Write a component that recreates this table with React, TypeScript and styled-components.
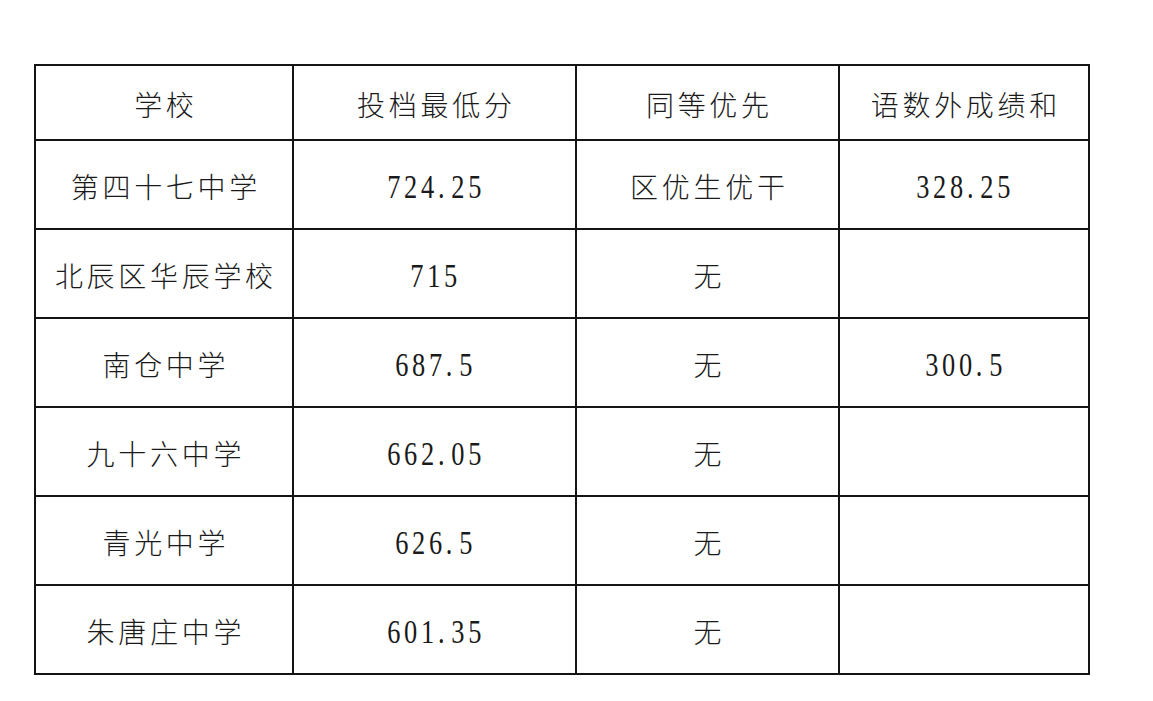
import React from "react";
import styled, { createGlobalStyle } from "styled-components";

const GlobalStyle = createGlobalStyle`
  html, body {
    margin: 0;
    padding: 0;
    background: #ffffff;
  }
`;

type Row = {
  school: string;
  score: string;
  priority: string;
  sum: string;
};

const rows: Row[] = [
  { school: "第四十七中学", score: "724.25", priority: "区优生优干", sum: "328.25" },
  { school: "北辰区华辰学校", score: "715", priority: "无", sum: "" },
  { school: "南仓中学", score: "687.5", priority: "无", sum: "300.5" },
  { school: "九十六中学", score: "662.05", priority: "无", sum: "" },
  { school: "青光中学", score: "626.5", priority: "无", sum: "" },
  { school: "朱唐庄中学", score: "601.35", priority: "无", sum: "" },
];

const headers = ["学校", "投档最低分", "同等优先", "语数外成绩和"];
const widths = [258, 283, 263, 250];

const Page = styled.div`
  width: 1153px;
  height: 701px;
  padding: 64px 0 0 34px;
  box-sizing: border-box;
  background: #ffffff;
`;

const Sheet = styled.table`
  border-collapse: collapse;
  table-layout: fixed;
  width: 1054px;
  color: #1a1a1a;
`;

const HeadRow = styled.tr`
  height: 75px;
`;

const BodyRow = styled.tr`
  height: 89px;
`;

const Cell = styled.td`
  border: 2px solid #141414;
  padding: 3px 0 0 0;
  text-align: center;
  vertical-align: middle;
  white-space: nowrap;
  font-family: "Noto Sans CJK SC", sans-serif;
  font-size: 28px;
  font-weight: 300;
  letter-spacing: 3.7px;
  text-indent: 3.7px;
`;

/* narrow serif figures, spaced out like the printed table */
const Figures = styled.span`
  display: inline-block;
  margin-left: -1px;
  font-family: "Liberation Serif", serif;
  font-size: 33px;
  font-weight: 400;
  letter-spacing: 4.6px;
  text-indent: 0;
  transform: scaleX(0.8);
  transform-origin: center;
`;

const Dot = styled.span`
  margin-right: 4px;
`;

const isNum = (s: string) => s !== "" && /^[0-9.]+$/.test(s);

const renderFigures = (v: string) => {
  const [whole, frac] = v.split(".");
  return (
    <Figures>
      {whole}
      {frac !== undefined && <Dot>.</Dot>}
      {frac}
    </Figures>
  );
};

export default function App() {
  return (
    <>
      <GlobalStyle />
      <Page>
        <Sheet>
          <colgroup>
            {widths.map((w, i) => (
              <col key={i} style={{ width: w }} />
            ))}
          </colgroup>
          <thead>
            <HeadRow>
              {headers.map((h) => (
                <Cell as="th" key={h}>
                  {h}
                </Cell>
              ))}
            </HeadRow>
          </thead>
          <tbody>
            {rows.map((r) => (
              <BodyRow key={r.school}>
                {[r.school, r.score, r.priority, r.sum].map((v, i) => (
                  <Cell key={i}>{isNum(v) ? renderFigures(v) : v}</Cell>
                ))}
              </BodyRow>
            ))}
          </tbody>
        </Sheet>
      </Page>
    </>
  );
}
